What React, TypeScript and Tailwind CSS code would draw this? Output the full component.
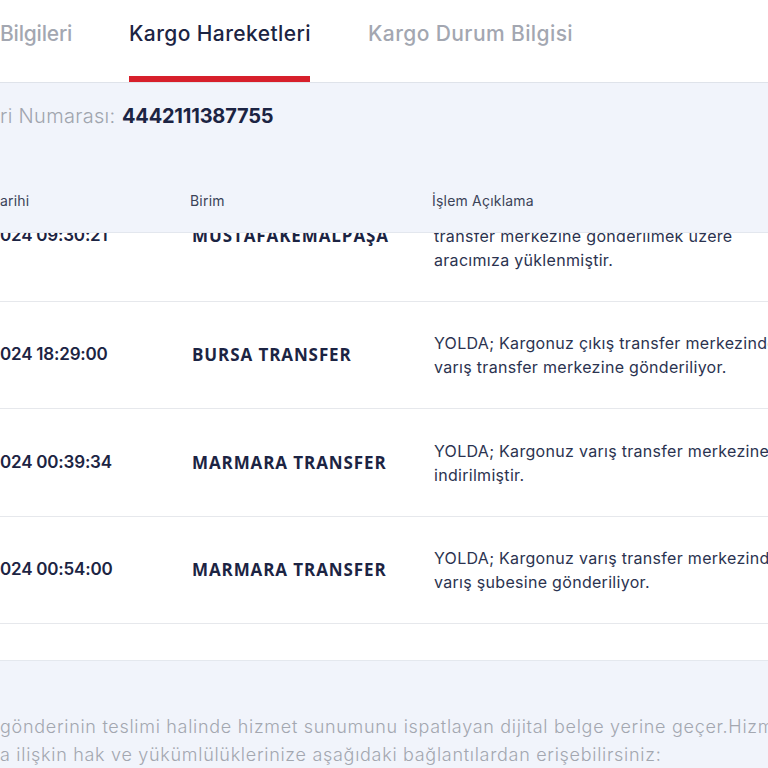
import React from "react";

function Cut({ hidden, children }: { hidden: string; children: React.ReactNode }) {
  return (
    <span className="inline-flex items-baseline whitespace-nowrap">
      <span className="inline-flex w-0 justify-end whitespace-nowrap">{hidden}</span>
      <span className="whitespace-nowrap">{children}</span>
    </span>
  );
}

type Row = { h: string; hiddenDate: string; date: string; unit: string; lines: string[] };

const rows: Row[] = [
  {
    h: "h-[132px]",
    hiddenDate: "12.08.2",
    date: "024 09:30:21",
    unit: "MUSTAFAKEMALPAŞA",
    lines: ["YOLDA; Kargonuz çıkış şubesinden", "transfer merkezine gönderilmek üzere", "aracımıza yüklenmiştir."],
  },
  {
    h: "h-[107px]",
    hiddenDate: "12.08.2",
    date: "024 18:29:00",
    unit: "BURSA TRANSFER",
    lines: ["YOLDA; Kargonuz çıkış transfer merkezinden", "varış transfer merkezine gönderiliyor."],
  },
  {
    h: "h-[108px]",
    hiddenDate: "13.08.2",
    date: "024 00:39:34",
    unit: "MARMARA TRANSFER",
    lines: ["YOLDA; Kargonuz varış transfer merkezine", "indirilmiştir."],
  },
  {
    h: "h-[107px]",
    hiddenDate: "13.08.2",
    date: "024 00:54:00",
    unit: "MARMARA TRANSFER",
    lines: ["YOLDA; Kargonuz varış transfer merkezinden", "varış şubesine gönderiliyor."],
  },
];

export default function App() {
  return (
    <div
      className="w-[768px] h-[768px] overflow-hidden bg-white flex flex-col"
      style={{ fontFamily: "Inter, 'Noto Sans', sans-serif" }}
    >
      {/* Tabs */}
      <div className="h-[83px] shrink-0 flex items-stretch border-b border-[#dfe3ea]">
        <div className="w-[70px] shrink-0 pt-[20px] text-[21px] leading-[28px] font-medium text-[#a3a7b1] tracking-[-0.2px]">
          <Cut hidden={"Gönderi\u00a0"}>Bilgileri</Cut>
        </div>
        <div className="ml-[59px] w-[181px] shrink-0 flex flex-col">
          <div className="pt-[20px] text-[21px] leading-[28px] font-medium text-[#1c2443] whitespace-nowrap tracking-[0.4px]">
            Kargo Hareketleri
          </div>
          <div className="mt-auto h-[6px] bg-[#d71f2b]" />
        </div>
        <div className="ml-[58px] shrink-0 pt-[20px] text-[21px] leading-[28px] font-medium text-[#a3a7b1] whitespace-nowrap tracking-[0.4px]">
          Kargo Durum Bilgisi
        </div>
      </div>

      {/* Info + table header */}
      <div className="shrink-0 bg-[#f1f4fb]">
        <div className="pt-[19px] h-[87px] text-[20px] leading-[28px] flex items-baseline">
          <span className="w-[118px] shrink-0 font-light text-[#a0a5ae] tracking-[0.3px]">
            <Cut hidden={"Gönde"}>ri Numarası:</Cut>
          </span>
          <span className="ml-[4px] font-bold text-[#1c2443] tracking-[-0.2px]">4442111387755</span>
        </div>
        <div className="h-[63px] pb-[2px] flex items-center border-b border-[#e3e7ee] text-[14px] tracking-[0.2px] text-[#3b4358]">
          <div className="w-[190px] shrink-0">
            <Cut hidden={"İşlem T"}>arihi</Cut>
          </div>
          <div className="w-[242px] shrink-0">Birim</div>
          <div className="whitespace-nowrap">İşlem Açıklama</div>
        </div>
      </div>

      {/* Body */}
      <div className="h-[391px] shrink-0 overflow-hidden bg-white">
        <div className="-mt-[63px]">
          {rows.map((r, i) => (
            <div key={i} className={`${r.h} flex items-center border-b border-[#e6e8ec]`}>
              <div className="w-[190px] shrink-0 text-[17px] font-semibold text-[#1c2443] tracking-[-0.2px]">
                <Cut hidden={r.hiddenDate}>{r.date}</Cut>
              </div>
              <div
                className="w-[242px] shrink-0 pl-[2px] text-[17px] font-bold text-[#1c2443] tracking-[0.9px] whitespace-nowrap"
                style={{ fontFamily: "'Open Sans', 'Noto Sans', sans-serif" }}
              >
                {r.unit}
              </div>
              <div className="shrink-0 pl-[2px] text-[16px] leading-[24px] tracking-[0.3px] text-[#2b3350] whitespace-nowrap">
                {r.lines.map((l, j) => (
                  <div key={j}>{l}</div>
                ))}
              </div>
            </div>
          ))}
        </div>
      </div>

      <div className="h-[36px] shrink-0 bg-white" />

      {/* Footer */}
      <div className="flex-1 bg-[#f1f4fb] border-t border-[#e4e8ee] pt-[52px] text-[18px] leading-[28px] font-light tracking-[0.7px] text-[#a3a7b0]">
        <div>
          <Cut hidden={"Bu belge,\u00a0"}>gönderinin teslimi halinde hizmet sunumunu ispatlayan dijital belge yerine geçer.Hizmet sunumuna</Cut>
        </div>
        <div>
          <Cut hidden={"Hizmet sunumun"}>a ilişkin hak ve yükümlülüklerinize aşağıdaki bağlantılardan erişebilirsiniz:</Cut>
        </div>
      </div>
    </div>
  );
}
